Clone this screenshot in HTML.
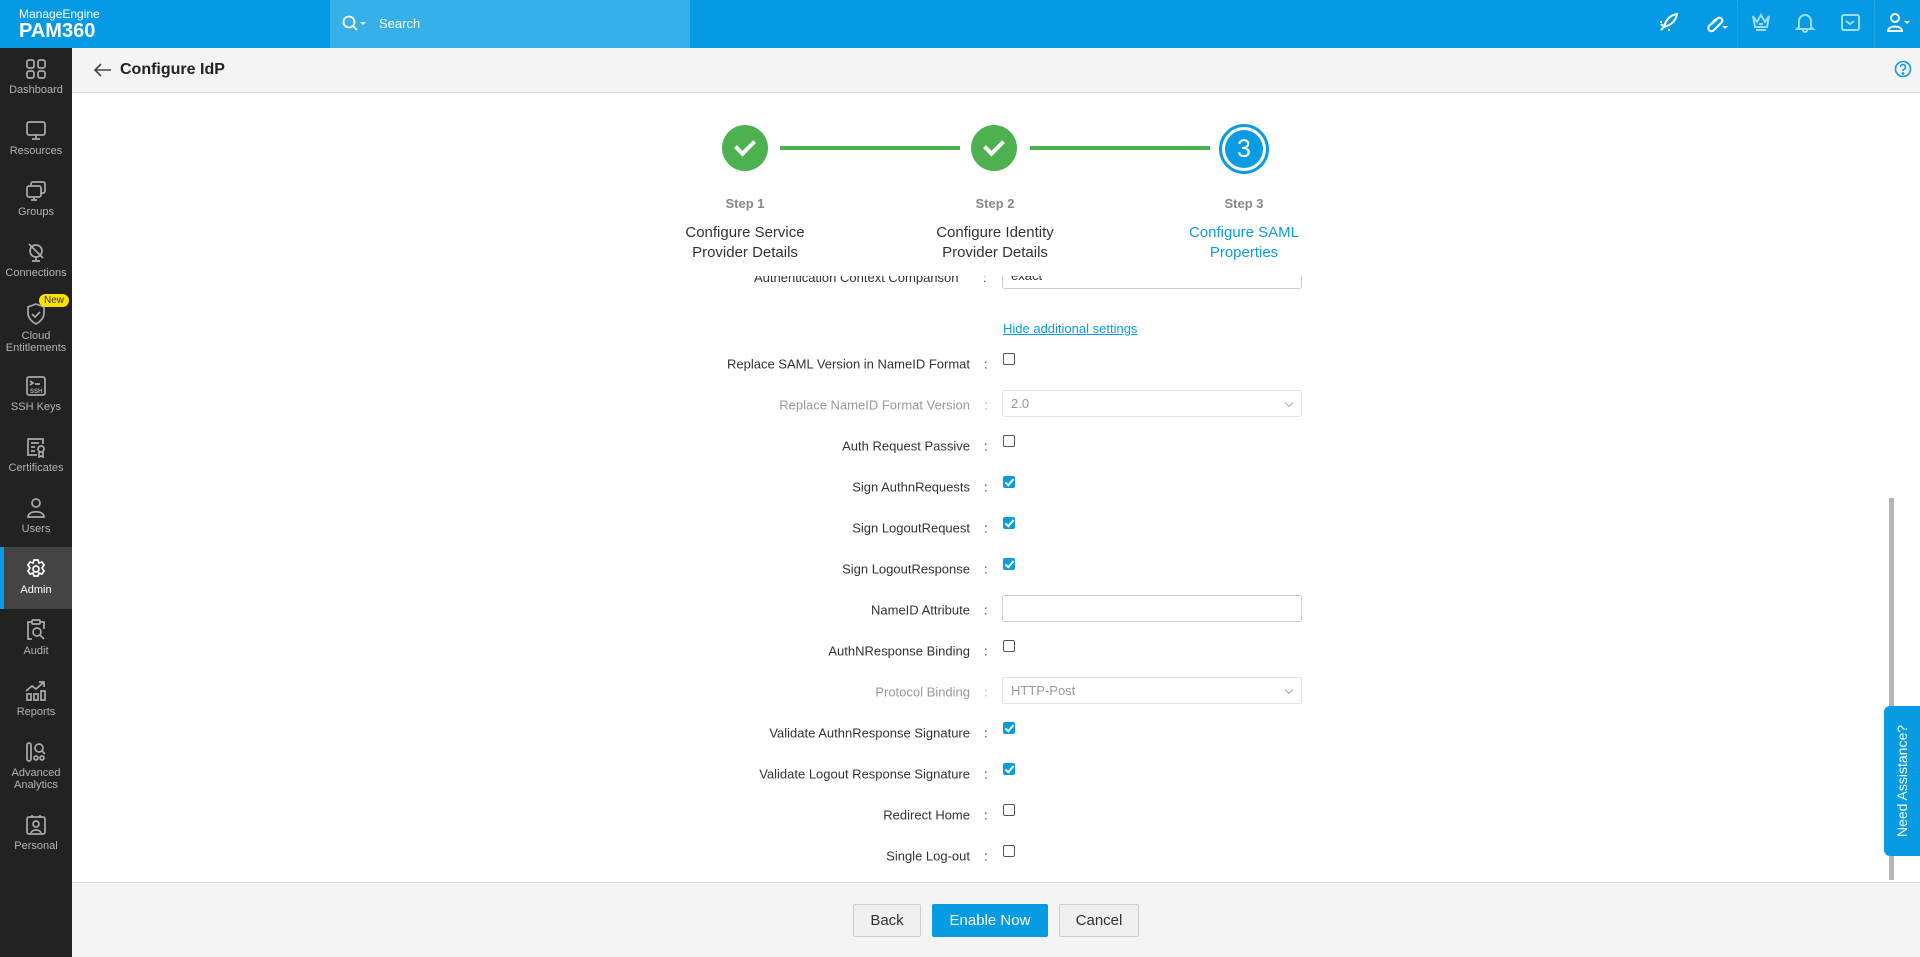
<!DOCTYPE html>
<html><head><meta charset="utf-8"><style>
*{box-sizing:border-box;margin:0;padding:0}
body{width:1920px;height:957px;overflow:hidden;font-family:"Liberation Sans",sans-serif;background:#fff;position:relative}
.top{position:absolute;left:0;top:0;width:1920px;height:48px;background:#059ae3}
.search{position:absolute;left:330px;top:0;width:360px;height:48px;background:#37afe9;color:#fff;font-size:13px}
.side{position:absolute;left:0;top:48px;width:72px;height:909px;background:#222}
.si{position:absolute;left:0;width:72px;text-align:center;color:#b3b3b3;font-size:11px;line-height:12px}
.si svg{display:block;margin:0 auto 4px}
.hdr{position:absolute;left:72px;top:48px;width:1848px;height:45px;background:#f4f4f4;border-bottom:1px solid #ddd}
.abs{position:absolute}
.lbl{position:absolute;right:950px;font-size:13px;color:#333;white-space:nowrap;transform:translateY(-50%)}
.lbl.dis{color:#999}
.col{position:absolute;left:984px;font-size:13px;color:#333;transform:translateY(-50%)}
.cb{position:absolute;left:1003px;width:12px;height:12px;border:1px solid #555;border-radius:2px;background:#fff}
.cb.on{background:#0a9be0;border-color:#0a9be0}
.cb.on:after{content:"";position:absolute;left:3px;top:0px;width:3px;height:7px;border:solid #fff;border-width:0 2px 2px 0;transform:rotate(40deg)}
.inp{position:absolute;left:1002px;width:300px;height:27px;border:1px solid #ccc;border-radius:3px;background:#fff;font-size:13px;color:#999;padding:5px 8px}
.inp.dis{border-color:#e2e2e2}
.chev{position:absolute;right:9px;top:9px;width:6px;height:6px;border:solid #aaa;border-width:0 1.5px 1.5px 0;transform:rotate(45deg)}
.circ{position:absolute;width:46px;height:46px;border-radius:50%;background:#4cb14e}
.circ:after{content:"";position:absolute;left:17px;top:11px;width:8px;height:15px;border:solid #fff;border-width:0 4px 4px 0;transform:rotate(45deg)}
.step{position:absolute;width:200px;text-align:center;font-size:13px;color:#888;font-weight:bold}
.st{position:absolute;width:200px;text-align:center;font-size:15px;color:#333;line-height:20px}
.btn{position:absolute;top:904px;height:33px;border:1px solid #ccc;border-radius:2px;background:#efefef;font-size:15px;color:#333;text-align:center;line-height:31px}
</style></head><body>
<div class="top">
 <div class="abs" style="left:19px;top:7px;color:#fff;font-size:12px">ManageEngine</div>
 <div class="abs" style="left:19px;top:20px;color:#fff;font-size:20px;font-weight:bold">PAM360</div>
 <div class="search">
  <svg class="abs" style="left:12px;top:15px" width="26" height="18"><circle cx="7" cy="7" r="5.5" fill="none" stroke="#fff" stroke-width="1.8"/><line x1="11" y1="11" x2="15" y2="15" stroke="#fff" stroke-width="1.8"/><path d="M18 7h6l-3 3z" fill="#fff"/></svg>
  <div class="abs" style="left:49px;top:16px">Search</div>
 </div>
 <svg class="abs" style="left:1656px;top:11px" width="24" height="24" fill="none" stroke="#fff" stroke-width="2"><path d="M8 16c2-8 7-12 13-13-1 6-5 11-13 13zM8 16l-3-3M6 11l-2 0M13 18l0 2M5 19l2-2"/></svg>
 <svg class="abs" style="left:1703px;top:11px" width="26" height="24" fill="none" stroke="#fff" stroke-width="2"><path d="M9 13l6-6a3 3 0 0 1 4 4l-8 8a3 3 0 0 1-5-4l7-7"/><path d="M19 15h6l-3 3z" fill="#fff" stroke="none"/></svg>
 <div class="abs" style="left:1737px;top:0;width:1px;height:48px;border-left:1px dotted #3aa9e6"></div>
 <svg class="abs" style="left:1750px;top:11px" width="22" height="22" fill="none" stroke="#9fdcf8" stroke-width="2"><path d="M3 5l4 6 4-7 4 7 4-6-2 11H5zM6 19h10M9 13h4"/></svg>
 <svg class="abs" style="left:1794px;top:11px" width="22" height="22" fill="none" stroke="#9fdcf8" stroke-width="2"><path d="M5 16V10a6 6 0 0 1 12 0v6l2 2H3zM9 19a2 2 0 0 0 4 0"/></svg>
 <svg class="abs" style="left:1840px;top:13px" width="22" height="20" fill="none" stroke="#9fdcf8" stroke-width="2"><rect x="2" y="2" width="17" height="15" rx="2"/><path d="M6 8l4 3 4-3"/></svg>
 <div class="abs" style="left:1874px;top:0;width:1px;height:48px;border-left:1px dotted #3aa9e6"></div>
 <svg class="abs" style="left:1885px;top:11px" width="28" height="24" fill="none" stroke="#fff" stroke-width="2"><circle cx="10" cy="7" r="4"/><path d="M3 20c0-6 14-6 14 0z"/><path d="M19 10h6l-3 3z" fill="#fff" stroke="none"/></svg>
</div>
<div class="side">
 <div class="si" style="top:10px"><svg width="22" height="22" fill="none" stroke="#aaa" stroke-width="1.7"><rect x="2" y="2" width="7" height="8" rx="2"/><rect x="13" y="2" width="7" height="8" rx="2"/><rect x="2" y="13" width="7" height="7" rx="2"/><rect x="13" y="13" width="7" height="7" rx="2"/></svg>Dashboard</div>
 <div class="si" style="top:71px"><svg width="22" height="22" fill="none" stroke="#aaa" stroke-width="1.7"><rect x="2" y="3" width="18" height="13" rx="2"/><path d="M11 16v4M7 20h8"/></svg>Resources</div>
 <div class="si" style="top:132px"><svg width="22" height="22" fill="none" stroke="#aaa" stroke-width="1.7"><rect x="6" y="2" width="14" height="11" rx="2"/><rect x="2" y="6" width="14" height="11" rx="2" fill="#222"/><path d="M9 17v3M6 20h6"/></svg>Groups</div>
 <div class="si" style="top:193px"><svg width="22" height="22" fill="none" stroke="#aaa" stroke-width="1.7"><circle cx="11" cy="10" r="6"/><path d="M4 3l14 14M11 16v4M7 20h8"/></svg>Connections</div>
 <div class="si" style="top:254px"><svg width="24" height="24" fill="none" stroke="#aaa" stroke-width="1.7"><path d="M12 2l8 3v6c0 5-4 9-8 11-4-2-8-6-8-11V5z"/><path d="M8 12l3 3 5-5"/></svg>Cloud<br>Entitlements</div>
 <div class="abs" style="left:39px;top:246px;background:#ffe000;color:#333;font-size:10px;border-radius:9px;padding:1px 5px">New</div>
 <div class="si" style="top:327px"><svg width="22" height="22" fill="none" stroke="#aaa" stroke-width="1.7"><rect x="2" y="2" width="18" height="18" rx="2"/><path d="M5 6l3 2-3 2M10 9h5"/><text x="5" y="18" font-size="6" fill="#aaa" stroke="none" font-family="Liberation Sans" font-weight="bold">SSH</text></svg>SSH Keys</div>
 <div class="si" style="top:388px"><svg width="22" height="22" fill="none" stroke="#aaa" stroke-width="1.7"><path d="M18 8V3H3v16h9M6 7h8M6 11h4M6 15h4"/><circle cx="16" cy="13" r="3"/><path d="M14 16v5l2-1 2 1v-5"/></svg>Certificates</div>
 <div class="si" style="top:449px"><svg width="22" height="22" fill="none" stroke="#aaa" stroke-width="1.7"><circle cx="11" cy="6" r="4"/><path d="M3 20c0-7 16-7 16 0z"/></svg>Users</div>
 <div class="abs" style="left:0;top:499px;width:72px;height:62px;background:#444;border-left:4px solid #0a9be0"></div>
 <div class="si" style="top:510px;color:#fff"><svg width="22" height="22" fill="none" stroke="#fff" stroke-width="1.7"><circle cx="11" cy="11" r="3"/><path d="M9 2h4l1 3 3-1 2 3-2 3 2 3-2 3-3-1-1 3H9l-1-3-3 1-2-3 2-3-2-3 2-3 3 1z"/></svg>Admin</div>
 <div class="si" style="top:571px"><svg width="22" height="22" fill="none" stroke="#aaa" stroke-width="1.7"><path d="M7 3H3v17h4M15 3h4v7"/><rect x="7" y="1" width="8" height="4" rx="1"/><circle cx="12" cy="13" r="4"/><path d="M15 16l4 4"/></svg>Audit</div>
 <div class="si" style="top:632px"><svg width="24" height="22" fill="none" stroke="#aaa" stroke-width="1.7"><path d="M2 11l6-5 4 3 8-7M15 2h5v5"/><rect x="3" y="14" width="4" height="6"/><rect x="10" y="14" width="4" height="6"/><rect x="17" y="11" width="4" height="9"/></svg>Reports</div>
 <div class="si" style="top:693px"><svg width="22" height="22" fill="none" stroke="#aaa" stroke-width="1.7"><rect x="2" y="2" width="4" height="18" rx="2"/><circle cx="14" cy="7" r="4"/><path d="M17 10l3 3"/><circle cx="11" cy="17" r="2"/><circle cx="17" cy="17" r="2"/></svg>Advanced<br>Analytics</div>
 <div class="si" style="top:766px"><svg width="22" height="22" fill="none" stroke="#aaa" stroke-width="1.7"><rect x="2" y="3" width="18" height="17" rx="2"/><circle cx="11" cy="10" r="3"/><path d="M6 19c1-4 9-4 10 0M7 1v3M15 1v3"/></svg>Personal</div>
</div>
<div class="hdr">
 <svg class="abs" style="left:22px;top:15px" width="18" height="14" fill="none" stroke="#444" stroke-width="1.6"><path d="M17 7H2M7 1L1 7l6 6"/></svg>
 <div class="abs" style="left:48px;top:13px;font-size:16px;color:#222;font-weight:bold">Configure IdP</div>
 <svg class="abs" style="left:1822px;top:12px" width="18" height="18" fill="none" stroke="#0a9be0" stroke-width="1.6"><circle cx="9" cy="9" r="7.5"/><path d="M6.5 7a2.5 2.5 0 1 1 3.5 2.3c-.8.4-1 1-1 1.7"/><circle cx="9" cy="13.5" r=".6" fill="#0a9be0"/></svg>
</div>
<!-- stepper -->
<div class="abs" style="left:780px;top:146px;width:180px;height:4px;background:#4cb14e"></div>
<div class="abs" style="left:1030px;top:146px;width:180px;height:4px;background:#4cb14e"></div>
<div class="circ" style="left:722px;top:125px"></div>
<div class="circ" style="left:971px;top:125px"></div>
<div class="abs" style="left:1219px;top:124px;width:50px;height:50px;border-radius:50%;border:3px solid #0a9be0;background:#fff"><div class="abs" style="left:3px;top:3px;width:38px;height:38px;border-radius:50%;background:#0a9be0;color:#fff;font-size:25px;text-align:center;line-height:38px">3</div></div>
<div class="step" style="left:645px;top:196px">Step 1</div>
<div class="step" style="left:895px;top:196px">Step 2</div>
<div class="step" style="left:1144px;top:196px">Step 3</div>
<div class="st" style="left:645px;top:223px">Configure Service<br>Provider Details</div>
<div class="st" style="left:895px;top:223px">Configure Identity<br>Provider Details</div>
<div class="st" style="left:1144px;top:223px;color:#0a9be0">Configure SAML<br>Properties</div>
<!-- form -->
<div class="abs" style="left:72px;top:276px;width:1810px;height:14px;overflow:hidden">
 <div class="abs" style="left:682px;top:-6px;font-size:13px;color:#333">Authentication Context Comparison</div>
 <div class="abs" style="left:911px;top:-6px;font-size:13px;color:#333">:</div>
 <div class="inp" style="left:930px;top:-14px;color:#333">exact</div>
</div>
<a class="abs" style="left:1003px;top:321px;font-size:13px;color:#0a9be0;text-decoration:underline">Hide additional settings</a>
<div class="lbl" style="top:364px">Replace SAML Version in NameID Format</div><div class="col" style="top:364px">:</div><div class="cb" style="top:353px"></div>
<div class="lbl dis" style="top:405px">Replace NameID Format Version</div><div class="col" style="top:405px;color:#aaa">:</div><div class="inp dis" style="top:390px">2.0<span class="chev"></span></div>
<div class="lbl" style="top:446px">Auth Request Passive</div><div class="col" style="top:446px">:</div><div class="cb" style="top:435px"></div>
<div class="lbl" style="top:487px">Sign AuthnRequests</div><div class="col" style="top:487px">:</div><div class="cb on" style="top:476px"></div>
<div class="lbl" style="top:528px">Sign LogoutRequest</div><div class="col" style="top:528px">:</div><div class="cb on" style="top:517px"></div>
<div class="lbl" style="top:569px">Sign LogoutResponse</div><div class="col" style="top:569px">:</div><div class="cb on" style="top:558px"></div>
<div class="lbl" style="top:610px">NameID Attribute</div><div class="col" style="top:610px">:</div><div class="inp" style="top:595px"></div>
<div class="lbl" style="top:651px">AuthNResponse Binding</div><div class="col" style="top:651px">:</div><div class="cb" style="top:640px"></div>
<div class="lbl dis" style="top:692px">Protocol Binding</div><div class="col" style="top:692px;color:#aaa">:</div><div class="inp dis" style="top:677px">HTTP-Post<span class="chev"></span></div>
<div class="lbl" style="top:733px">Validate AuthnResponse Signature</div><div class="col" style="top:733px">:</div><div class="cb on" style="top:722px"></div>
<div class="lbl" style="top:774px">Validate Logout Response Signature</div><div class="col" style="top:774px">:</div><div class="cb on" style="top:763px"></div>
<div class="lbl" style="top:815px">Redirect Home</div><div class="col" style="top:815px">:</div><div class="cb" style="top:804px"></div>
<div class="lbl" style="top:856px">Single Log-out</div><div class="col" style="top:856px">:</div><div class="cb" style="top:845px"></div>
<!-- scrollbar -->
<div class="abs" style="left:1889px;top:498px;width:5px;height:382px;background:#b5b5b5"></div>
<!-- footer -->
<div class="abs" style="left:72px;top:882px;width:1848px;height:75px;background:#f4f4f4;border-top:1px solid #ddd"></div>
<div class="btn" style="left:853px;width:68px">Back</div>
<div class="btn" style="left:932px;width:116px;background:#069be2;border-color:#069be2;color:#fff">Enable Now</div>
<div class="btn" style="left:1059px;width:80px">Cancel</div>
<!-- need assistance -->
<div class="abs" style="left:1884px;top:706px;width:36px;height:150px;background:#069be2;border-radius:6px 0 0 6px"><div class="abs" style="left:18px;top:75px;transform:translate(-50%,-50%) rotate(-90deg);color:#fff;font-size:14px;white-space:nowrap">Need Assistance?</div></div>
</body></html>
